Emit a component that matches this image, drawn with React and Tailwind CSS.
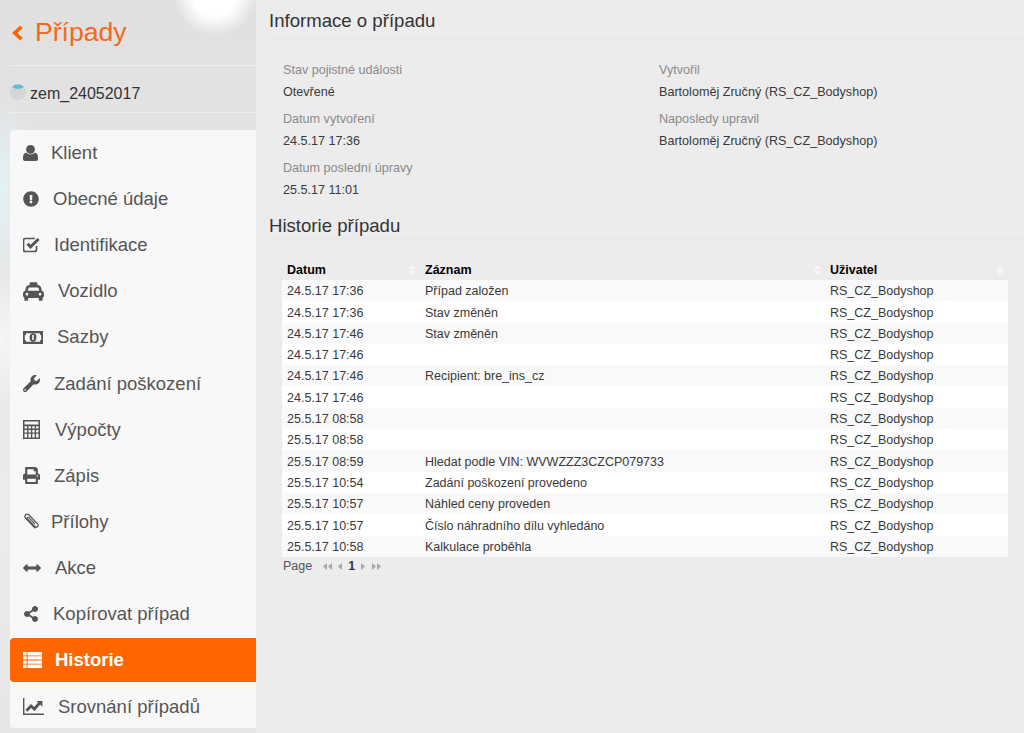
import React from "react"
import { FaExclamationCircle, FaTaxi, FaWrench, FaPrint, FaArrowsAltH, FaShareAlt, FaSort } from "react-icons/fa"

const UserIcon = () => (
  <svg width="15" height="16" viewBox="0 0 15 16" fill="currentColor">
    <circle cx="7.5" cy="4.4" r="4.4" />
    <path d="M3 7.6C1 8.2 0 10 0 12.6V14c0 1.2.9 2 2 2h11c1.1 0 2-.8 2-2v-1.4c0-2.6-1-4.4-3-5-1 1-2.6 1.9-4.5 1.9S4 8.6 3 7.6Z" />
  </svg>
)
const CheckIcon = () => (
  <svg width="18" height="16" viewBox="0 0 18 16" fill="none" stroke="currentColor">
    <path d="M13.5 9v3.5c0 1.1-.9 2-2 2h-9c-1.1 0-2-.9-2-2v-9c0-1.1.9-2 2-2h9.5" strokeWidth="1.7" />
    <path d="M4.5 6.8l3 3L15.6 2" strokeWidth="3" />
  </svg>
)
const MoneyIcon = () => (
  <svg width="20" height="13" viewBox="0 0 20 13">
    <path fillRule="evenodd" fill="currentColor" d="M0 0h20v13H0Zm3 2.2C3 3.5 2.9 4 1.8 4v5c1.1 0 1.2.6 1.2 1.8h14c0-1.2.1-1.8 1.2-1.8V4C17.1 4 17 3.5 17 2.2Z" />
    <ellipse cx="10" cy="6.5" rx="3.4" ry="4.2" fill="currentColor" />
    <rect x="9.2" y="4" width="1.6" height="5" fill="#f8f8f8" />
  </svg>
)
const CalcIcon = () => (
  <svg width="17" height="19" viewBox="0 0 17 19" fill="currentColor">
    <path fillRule="evenodd" d="M0 0h17v19H0Zm1.5 1.5v3h14v-3Zm0 4.7v2.4h2.6V6.2Zm4 0v2.4h2.4V6.2Zm3.8 0v2.4h2.4V6.2Zm3.8 0v2.4h2.4V6.2ZM1.5 10v2.4h2.6V10Zm4 0v2.4h2.4V10Zm3.8 0v2.4h2.4V10Zm3.8 0v2.4h2.4V10ZM1.5 13.8v3.7h2.6v-3.7Zm4 0v3.7h2.4v-3.7Zm3.8 0v3.7h2.4v-3.7Zm3.8 0v3.7h2.4v-3.7Z" />
  </svg>
)
const ClipIcon = () => (
  <svg width="16" height="17" viewBox="0 0 16 17" fill="none" stroke="currentColor" strokeWidth="1.3">
    <path d="M12.2 15.2 3 5.6C1.6 4.2 1.6 2.8 2.6 1.8 3.6.8 5.1 1 6.3 2.2l8 8.4c1 1 1 2.2.2 3s-2 .7-3-.3L4.7 6.2c-.6-.7-.6-1.2-.2-1.6s1-.3 1.6.3l6 6.2" />
  </svg>
)
const ListIcon = () => (
  <svg width="19" height="16" viewBox="0 0 19 16" fill="currentColor">
    <path d="M0 0h3.6v3.4H0Zm4.6 0H19v3.4H4.6ZM0 4.2h3.6v3.4H0Zm4.6 0H19v3.4H4.6ZM0 8.4h3.6v3.4H0Zm4.6 0H19v3.4H4.6ZM0 12.6h3.6V16H0Zm4.6 0H19V16H4.6Z" />
  </svg>
)
const ChartIcon = () => (
  <svg width="21" height="17" viewBox="0 0 21 17" fill="none" stroke="currentColor">
    <path d="M.7 0v16.2H21" strokeWidth="1.4" />
    <path d="M3.5 12.8 8 8l3.4 3L16.6 5" strokeWidth="2.8" />
    <path d="M13.6 3h5.8v5.8Z" fill="currentColor" stroke="none" />
  </svg>
)

const ExclaimIcon = () => <FaExclamationCircle size={16} />
const TaxiIcon = () => <FaTaxi size={21} />
const WrenchIcon = () => <FaWrench size={17} />
const PrintIcon = () => <FaPrint size={17} />
const ArrowsIcon = () => <FaArrowsAltH size={18} />
const ShareIcon = () => <FaShareAlt size={16} />

const menu = [
  { label: "Klient", icon: UserIcon, gap: "ml-[13px]", w: "w-[15px]" },
  { label: "Obecné údaje", icon: ExclaimIcon, gap: "ml-[14px]", w: "w-[16px]" },
  { label: "Identifikace", icon: CheckIcon, gap: "ml-[13px]", w: "w-[18px]" },
  { label: "Vozidlo", icon: TaxiIcon, gap: "ml-[14px]", w: "w-[21px]" },
  { label: "Sazby", icon: MoneyIcon, gap: "ml-[14px]", w: "w-[20px]" },
  { label: "Zadání poškození", icon: WrenchIcon, gap: "ml-[14px]", w: "w-[17px]" },
  { label: "Výpočty", icon: CalcIcon, gap: "ml-[15px]", w: "w-[17px]" },
  { label: "Zápis", icon: PrintIcon, gap: "ml-[14px]", w: "w-[17px]" },
  { label: "Přílohy", icon: ClipIcon, gap: "ml-[12px]", w: "w-[16px]" },
  { label: "Akce", icon: ArrowsIcon, gap: "ml-[14px]", w: "w-[18px]" },
  { label: "Kopírovat případ", icon: ShareIcon, gap: "ml-[14px]", w: "w-[16px]" },
  { label: "Historie", icon: ListIcon, gap: "ml-[13px]", w: "w-[19px]", active: true },
  { label: "Srovnání případů", icon: ChartIcon, gap: "ml-[14px]", w: "w-[21px]" },
]

const history = [
  ["24.5.17 17:36", "Případ založen"],
  ["24.5.17 17:36", "Stav změněn"],
  ["24.5.17 17:46", "Stav změněn"],
  ["24.5.17 17:46", ""],
  ["24.5.17 17:46", "Recipient: bre_ins_cz"],
  ["24.5.17 17:46", ""],
  ["25.5.17 08:58", ""],
  ["25.5.17 08:58", ""],
  ["25.5.17 08:59", "Hledat podle VIN: WVWZZZ3CZCP079733"],
  ["25.5.17 10:54", "Zadání poškození provedeno"],
  ["25.5.17 10:57", "Náhled ceny proveden"],
  ["25.5.17 10:57", "Číslo náhradního dílu vyhledáno"],
  ["25.5.17 10:58", "Kalkulace proběhla"],
]

function Field({ label, value }) {
  return (
    <div className="h-[49px]">
      <div className="text-[12.6px] leading-[17px] text-[#8a8a8a]">{label}</div>
      <div className="mt-[5px] text-[12.6px] leading-[17px] text-[#3a3a3a]">{value}</div>
    </div>
  )
}

function HeadCell({ children, width }) {
  return (
    <th className={`${width} relative pl-[5px] pt-[2px] text-left text-[12.5px] font-bold text-black`}>
      {children}
      <FaSort size={12} className="absolute right-[2px] top-[5px] text-[#f7f7f7]" />
    </th>
  )
}

function Arrows({ dir, double }) {
  return (
    <svg width={double ? 9 : 4} height="7" viewBox={double ? "0 0 9 7" : "0 0 4 7"} fill="currentColor" className={dir === "left" ? "" : "rotate-180"}>
      <path d="M0 3.5 4 0v7Z" />
      {double && <path d="M5 3.5 9 0v7Z" />}
    </svg>
  )
}

export default function App() {
  return (
    <div className="flex h-[733px] w-[1024px] overflow-hidden bg-[#ececec] font-['Liberation_Sans',Arial,sans-serif]">
      {/* Levý panel */}
      <aside className="h-full w-[256px] shrink-0 bg-[#e2e2e3] bg-[radial-gradient(circle_at_215px_-6px,#ffffff_0,#ffffff_22px,#ffffff00_42px),radial-gradient(ellipse_40px_90px_at_0px_190px,#e2f3f5_0,#e2f3f500_100%),radial-gradient(ellipse_40px_70px_at_0px_340px,#f6f6f6_0,#f6f6f600_100%),linear-gradient(180deg,#e0e0e1_0,#ececec_70%,#e6e6e6_100%)]">
        <div className="ml-[10px] flex h-[66px] items-center border-b border-[#efefef]">
          <svg width="13" height="16" viewBox="0 0 13 16" fill="none" stroke="#ff6600" strokeWidth="3.6" className="ml-[1px]">
            <path d="M10.5 1.8 3.6 8l6.9 6.2" />
          </svg>
          <span className="ml-[11px] text-[26.6px] leading-none text-[#f5691c]">Případy</span>
        </div>
        <div className="ml-[10px] flex h-[47px] items-center border-b border-[#efefef] pt-[9px]">
          <svg width="16" height="16" viewBox="0 0 16 16" className="-mt-[3px]">
            <circle cx="8" cy="8" r="8" fill="#d5d6d6" />
            <path d="M2 3 A8 8 0 0 1 14 3 Q8 7 2 3Z" fill="#5cbfd6" />
          </svg>
          <span className="ml-[4px] text-[16px] text-[#333]">zem_24052017</span>
        </div>
        <nav className="ml-[10px] mt-[17px] h-[598px] overflow-hidden rounded-l-[4px] bg-[#f8f8f8] pt-[0.8px]">
          {menu.map((item) => {
            const Icon = item.icon
            return (
              <div
                key={item.label}
                className={`mb-[2.15px] flex h-[44px] items-center rounded-l-[4px] pl-[13px] text-[18.5px] ${item.active ? "bg-[#ff6600] font-bold text-white" : "text-[#555]"}`}
              >
                <span className={`${item.w} flex justify-center`}>
                  <Icon />
                </span>
                <span className={item.gap}>{item.label}</span>
              </div>
            )
          })}
        </nav>
      </aside>

      {/* Obsah */}
      <main className="min-w-0 flex-1 pl-[13px]">
        <h2 className="h-[39px] border-b border-[#e6e6e6] pt-[9px] text-[18.6px] leading-[24px] text-[#333]">
          Informace o případu
        </h2>
        <div className="mt-[23px] flex h-[149px] pl-[14px]">
          <div className="w-[376px]">
            <Field label="Stav pojistné události" value="Otevřené" />
            <Field label="Datum vytvoření" value="24.5.17 17:36" />
            <Field label="Datum poslední úpravy" value="25.5.17 11:01" />
          </div>
          <div>
            <Field label="Vytvořil" value="Bartoloměj Zručný (RS_CZ_Bodyshop)" />
            <Field label="Naposledy upravil" value="Bartoloměj Zručný (RS_CZ_Bodyshop)" />
          </div>
        </div>
        <h2 className="h-[28px] border-b border-[#e6e6e6] text-[18.6px] leading-[30px] text-[#333]">
          Historie případu
        </h2>
        <div className="ml-[13px] mt-[20px] w-[726px]">
          <table className="w-full table-fixed border-collapse">
            <thead>
              <tr className="h-[21px]">
                <HeadCell width="w-[138px]">Datum</HeadCell>
                <HeadCell width="w-[405px]">Záznam</HeadCell>
                <HeadCell width="w-[183px]">Uživatel</HeadCell>
              </tr>
            </thead>
            <tbody>
              {history.map((row, i) => (
                <tr key={i} className={`h-[21.3px] text-[12.5px] text-[#3a3a3a] ${i % 2 === 0 ? "bg-[#f9f9f9]" : "bg-white"}`}>
                  <td className="pl-[5px] pt-[2px]">{row[0]}</td>
                  <td className="pl-[5px] pt-[2px]">{row[1]}</td>
                  <td className="pl-[5px] pt-[2px]">RS_CZ_Bodyshop</td>
                </tr>
              ))}
            </tbody>
          </table>
          <div className="flex h-[20px] items-center pl-[1px] text-[12.5px] text-[#555]">
            <span>Page</span>
            <span className="ml-[11px] flex items-center text-[#a8a8a8]">
              <Arrows dir="left" double />
              <span className="ml-[6px]"><Arrows dir="left" /></span>
              <b className="mx-[6px] text-[12.5px] text-[#333]">1</b>
              <Arrows dir="right" />
              <span className="ml-[7px]"><Arrows dir="right" double /></span>
            </span>
          </div>
        </div>
      </main>
    </div>
  )
}
